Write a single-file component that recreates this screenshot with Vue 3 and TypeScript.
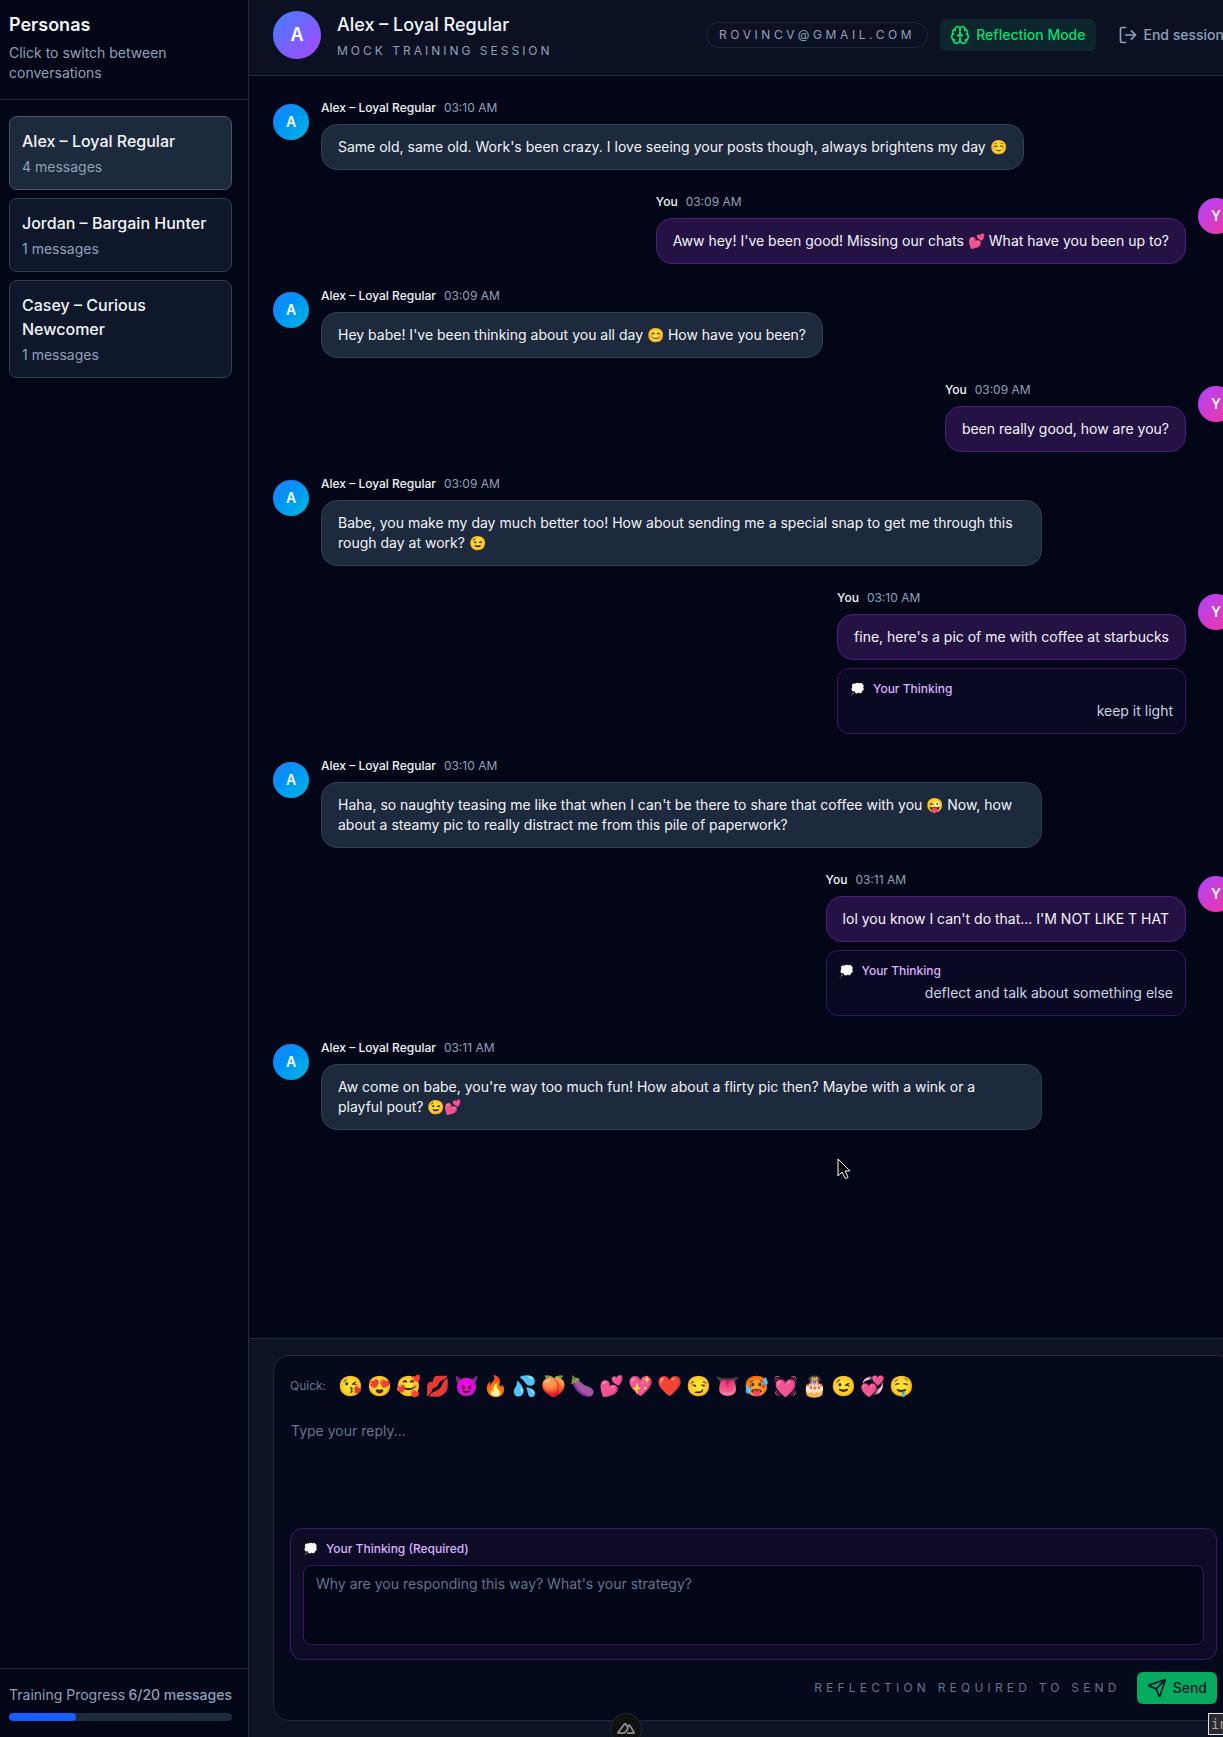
<script setup lang="ts">
import { ref } from 'vue'

interface Persona {
  name: string
  messages: number
}

interface Message {
  from: 'them' | 'you'
  time: string
  text: string
  thinking?: string
}

const personas: Persona[] = [
  { name: 'Alex – Loyal Regular', messages: 4 },
  { name: 'Jordan – Bargain Hunter', messages: 1 },
  { name: 'Casey – Curious Newcomer', messages: 1 },
]
const active = ref(0)

const messages: Message[] = [
  { from: 'them', time: '03:10 AM', text: "Same old, same old. Work's been crazy. I love seeing your posts though, always brightens my day ☺️" },
  { from: 'you', time: '03:09 AM', text: "Aww hey! I've been good! Missing our chats 💕 What have you been up to?" },
  { from: 'them', time: '03:09 AM', text: "Hey babe! I've been thinking about you all day 😊 How have you been?" },
  { from: 'you', time: '03:09 AM', text: 'been really good, how are you?' },
  { from: 'them', time: '03:09 AM', text: 'Babe, you make my day much better too! How about sending me a special snap to get me through this rough day at work? 😉' },
  { from: 'you', time: '03:10 AM', text: "fine, here's a pic of me with coffee at starbucks", thinking: 'keep it light' },
  { from: 'them', time: '03:10 AM', text: "Haha, so naughty teasing me like that when I can't be there to share that coffee with you 😜 Now, how about a steamy pic to really distract me from this pile of paperwork?" },
  { from: 'you', time: '03:11 AM', text: "lol you know I can't do that... I'M NOT LIKE T HAT", thinking: 'deflect and talk about something else' },
  { from: 'them', time: '03:11 AM', text: "Aw come on babe, you're way too much fun! How about a flirty pic then? Maybe with a wink or a\nplayful pout? 😉💕" },
]

const quickEmojis = ['😘', '😍', '🥰', '💋', '😈', '🔥', '💦', '🍑', '🍆', '💕', '💖', '❤️', '😏', '👅', '🥵', '💓', '🎂', '😉', '💞', '🤤']

const sent = 6
const goal = 20
const reply = ref('')
const strategy = ref('')
</script>

<template>
  <div class="viewport">
    <div class="shell">
      <aside class="sidebar">
        <header class="side-head">
          <h2>Personas</h2>
          <p>Click to switch between conversations</p>
        </header>
        <nav class="personas">
          <button
            v-for="(p, i) in personas"
            :key="p.name"
            type="button"
            class="persona"
            :class="{ active: i === active }"
            @click="active = i"
          >
            <span class="persona-name">{{ p.name }}</span>
            <span class="persona-count">{{ p.messages }} messages</span>
          </button>
        </nav>
        <footer class="progress">
          <div class="progress-row">
            <span>Training Progress</span>
            <strong>{{ sent }}/{{ goal }} messages</strong>
          </div>
          <div class="track"><div class="fill" :style="{ width: (sent / goal) * 100 + '%' }"></div></div>
        </footer>
      </aside>

      <main class="main">
        <header class="top">
          <div class="avatar big">A</div>
          <div class="titles">
            <h1>Alex – Loyal Regular</h1>
            <p>MOCK TRAINING SESSION</p>
          </div>
          <div class="actions">
            <span class="email">ROVINCV@GMAIL.COM</span>
            <button type="button" class="btn reflect">
              <svg class="icon" viewBox="0 0 24 24">
                <path d="M12 18V5" />
                <path d="M15 13a4.17 4.17 0 0 1-3-4 4.17 4.17 0 0 1-3 4" />
                <path d="M17.598 6.5A3 3 0 1 0 12 5a3 3 0 1 0-5.598 1.5" />
                <path d="M17.997 5.125a4 4 0 0 1 2.526 5.77" />
                <path d="M18 18a4 4 0 0 0 2-7.464" />
                <path d="M19.967 17.483A4 4 0 1 1 12 18a4 4 0 1 1-7.967-.517" />
                <path d="M6 18a4 4 0 0 1-2-7.464" />
                <path d="M6.003 5.125a4 4 0 0 0-2.526 5.77" />
              </svg>
              Reflection Mode
            </button>
            <button type="button" class="btn end">
              <svg class="icon" viewBox="0 0 24 24">
                <path d="m16 17 5-5-5-5" />
                <path d="M21 12H9" />
                <path d="M9 21H5a2 2 0 0 1-2-2V5a2 2 0 0 1 2-2h4" />
              </svg>
              End session
            </button>
          </div>
        </header>

        <section class="messages">
          <article v-for="(m, i) in messages" :key="i" class="message" :class="m.from">
            <div class="avatar">{{ m.from === 'you' ? 'Y' : 'A' }}</div>
            <div class="body">
              <div class="meta">
                <span class="author">{{ m.from === 'you' ? 'You' : 'Alex – Loyal Regular' }}</span>
                <time>{{ m.time }}</time>
              </div>
              <div class="bubble">{{ m.text }}</div>
              <div v-if="m.thinking" class="thought">
                <div class="thought-label"><span>💭</span><span>Your Thinking</span></div>
                <p>{{ m.thinking }}</p>
              </div>
            </div>
          </article>
        </section>

        <section class="composer">
          <form class="card" @submit.prevent>
            <div class="quick">
              <span class="quick-label">Quick:</span>
              <button v-for="e in quickEmojis" :key="e" type="button" class="emoji" @click="reply += e">{{ e }}</button>
            </div>
            <textarea v-model="reply" class="reply" aria-label="Reply" placeholder="Type your reply..."></textarea>
            <div class="strategy">
              <label for="strategy" class="thought-label"><span>💭</span><span>Your Thinking (Required)</span></label>
              <textarea id="strategy" v-model="strategy" placeholder="Why are you responding this way? What's your strategy?"></textarea>
            </div>
            <div class="send-row">
              <span class="hint">REFLECTION REQUIRED TO SEND</span>
              <button type="submit" class="btn send">
                <svg class="icon" viewBox="0 0 24 24">
                  <path d="M14.536 21.686a.5.5 0 0 0 .937-.024l6.5-19a.496.496 0 0 0-.635-.635l-19 6.5a.5.5 0 0 0-.024.937l7.93 3.18a2 2 0 0 1 1.112 1.11z" />
                  <path d="m21.854 2.147-10.94 10.939" />
                </svg>
                Send
              </button>
            </div>
          </form>
        </section>
      </main>
    </div>

    <button type="button" class="devtools" aria-label="Nuxt DevTools">
      <svg viewBox="0 0 324 200">
        <path d="M182 184h114c8 0 14-7 9-15L230 42c-4-7-13-7-17 0l-20 34-38-62c-4-7-13-7-17 0L21 169c-5 8 1 15 9 15h72c28 0 49-12 63-36l36-61" />
      </svg>
    </button>
    <div class="inspector">in</div>
    <svg class="cursor" viewBox="0 0 14 22">
      <path d="M1 1v17l4-4 3 6c1 1 3 0 3-1l-3-6h5z" />
    </svg>
  </div>
</template>

<style>
body {
  background: #020618;
}
</style>

<style scoped>
* {
  box-sizing: border-box;
}

.viewport {
  position: relative;
  min-height: 100vh;
  overflow: hidden;
  background: #020617;
  color: #f1f5f9;
  font-family: Inter, 'Noto Sans', sans-serif;
  font-size: 14px;
  line-height: 20px;
}

h1,
h2,
p {
  margin: 0;
}

button,
textarea {
  font: inherit;
  color: inherit;
}

/* The app frame is slightly larger than the window and scrolled a little */
.shell {
  display: flex;
  width: calc(100% + 42px);
  min-height: calc(100vh + 5px);
  margin: -5px 0 0 -7px;
}

.sidebar {
  display: flex;
  flex: none;
  flex-direction: column;
  width: 256px;
  border-right: 1px solid #1d293d;
}

.side-head {
  padding: 16px;
  border-bottom: 1px solid #1d293d;
}

h1,
h2 {
  font-size: 18px;
  line-height: 28px;
  font-weight: 600;
}

h1 {
  font-weight: 500;
}

.side-head p {
  margin-top: 4px;
  color: #90a1b9;
}

.personas {
  display: flex;
  flex: 1;
  flex-direction: column;
  gap: 8px;
  padding: 16px;
}

.persona {
  display: flex;
  flex-direction: column;
  gap: 4px;
  padding: 12px;
  border: 1px solid #314158;
  border-radius: 8px;
  background: #0f172b;
  text-align: left;
}

.persona.active {
  border-color: #45556c;
  background: #1d293d;
}

.persona-name {
  font-size: 16px;
  line-height: 24px;
  font-weight: 500;
}

.persona-count {
  color: #90a1b9;
}

.progress {
  padding: 16px;
  border-top: 1px solid #1d293d;
  color: #90a1b9;
}

.progress-row {
  display: flex;
  justify-content: space-between;
  white-space: nowrap;
}

.progress-row strong {
  font-weight: 500;
}

.track {
  height: 8px;
  margin-top: 8px;
  border-radius: 4px;
  background: #1d293d;
  overflow: hidden;
}

.fill {
  height: 100%;
  border-radius: 4px;
  background: #155dfc;
}

.main {
  display: flex;
  flex: 1;
  flex-direction: column;
  min-width: 0;
}

.top {
  display: flex;
  align-items: center;
  gap: 16px;
  padding: 16px 24px;
  border-bottom: 1px solid #1d293d;
  background: #0b1123;
}

.avatar {
  display: flex;
  flex: none;
  align-items: center;
  justify-content: center;
  width: 36px;
  height: 36px;
  border-radius: 50%;
  background: linear-gradient(135deg, #2b7fff, #0092f8 40%, #00b8db);
  color: #fff;
  font-weight: 600;
}

.avatar.big {
  width: 48px;
  height: 48px;
  background: linear-gradient(135deg, #3f80ff, #ad46ff);
  font-size: 18px;
}

.titles p {
  margin-top: 4px;
  color: #90a1b9;
  font-size: 12px;
  line-height: 16px;
  letter-spacing: 3px;
}

.actions {
  display: flex;
  align-items: center;
  gap: 12px;
  margin-left: auto;
  white-space: nowrap;
}

.email {
  padding: 4px 12px;
  border: 1px solid #1d293d;
  border-radius: 13px;
  color: #90a1b9;
  font-size: 12px;
  line-height: 16px;
  letter-spacing: 0.3em;
}

.btn {
  display: flex;
  align-items: center;
  gap: 6px;
  height: 32px;
  padding: 0 10px;
  border: 0;
  border-radius: 6px;
  background: none;
  font-weight: 500;
}

.icon {
  width: 20px;
  height: 20px;
  fill: none;
  stroke: currentColor;
  stroke-width: 2;
  stroke-linecap: round;
  stroke-linejoin: round;
}

.reflect {
  background: #0b262c;
  color: #05df72;
}

.end {
  color: #90a1b9;
}

.messages {
  display: flex;
  flex: 1;
  flex-direction: column;
  gap: 24px;
  padding: 24px;
}

.message {
  display: flex;
  align-items: flex-start;
  gap: 12px;
}

.message.you {
  flex-direction: row-reverse;
}

.message .avatar {
  margin-top: 4px;
}

.you .avatar {
  background: linear-gradient(135deg, #ad46ff, #f6339a);
}

.body {
  display: flex;
  flex-direction: column;
  gap: 8px;
  max-width: 75%;
}

.meta {
  display: flex;
  gap: 8px;
  color: #90a1b9;
  font-size: 12px;
  line-height: 16px;
}

.author {
  color: #f1f5f9;
  font-weight: 500;
}

.bubble {
  padding: 12px 16px;
  border: 1px solid #314158;
  border-radius: 16px;
  background: #1d293d;
  white-space: pre-wrap;
}

/* Keeps a bubble whose text has a line break as wide as the wrapped ones */
.message:last-child .body {
  width: 75%;
}

.you .bubble {
  border-color: #4f1d80;
  background: #251244;
}

.thought {
  padding: 12px;
  border: 1px solid #39175f;
  border-radius: 12px;
  background: #090822;
}

.thought-label {
  display: flex;
  gap: 8px;
  color: #dab2ff;
  font-size: 12px;
  line-height: 16px;
  font-weight: 500;
}

.thought p {
  margin-top: 4px;
  color: #cad5e2;
  text-align: right;
}

.composer {
  padding: 16px 24px;
  border-top: 1px solid #1d293d;
  background: #0c1325;
}

.card {
  display: flex;
  flex-direction: column;
  gap: 12px;
  padding: 16px;
  border: 1px solid #1d293d;
  border-radius: 16px;
  background: #040a1b;
}

.quick {
  display: flex;
  align-items: center;
  gap: 4px;
}

.quick-label {
  margin-right: 8px;
  color: #62748e;
  font-size: 12px;
  line-height: 16px;
}

.emoji {
  padding: 0;
  border: 0;
  background: none;
  font-size: 20px;
  line-height: 28px;
}

textarea {
  display: block;
  width: 100%;
  resize: none;
  outline: none;
}

textarea::placeholder {
  color: #62748e;
  opacity: 1;
}

.reply {
  height: 104px;
  padding: 8px 0;
  border: 1px solid transparent;
  background: none;
}

.strategy {
  display: flex;
  flex-direction: column;
  gap: 8px;
  padding: 12px 12px 14px;
  border: 1px solid #3f1a68;
  border-radius: 12px;
  background: #0e0b26;
}

.strategy textarea {
  height: 80px;
  padding: 8px 12px;
  border: 1px solid #3b1763;
  border-radius: 8px;
  background: #020617;
}

.send-row {
  display: flex;
  align-items: center;
  justify-content: flex-end;
  gap: 16px;
}

.hint {
  color: #62748e;
  font-size: 12px;
  line-height: 16px;
  letter-spacing: 0.35em;
}

.send {
  background: #05ab5f;
  color: #0f172b;
}

.devtools {
  position: absolute;
  bottom: -8px;
  left: calc(50% + 14px);
  width: 32px;
  height: 32px;
  padding: 0 6px;
  border: 1px solid #262626;
  border-radius: 16px;
  background: #111;
  transform: translateX(-50%);
}

.devtools svg {
  display: block;
  width: 18px;
  fill: none;
  stroke: #8f8f8f;
  stroke-width: 32;
  stroke-linejoin: round;
}

.inspector {
  position: absolute;
  right: -20px;
  bottom: 2px;
  width: 35px;
  height: 22px;
  padding-left: 2px;
  border: 1px solid #e5e5e5;
  background: #2b2a33;
  color: #a3a3a3;
  font-family: 'DejaVu Sans Mono', monospace;
  font-size: 14px;
}

.cursor {
  position: absolute;
  top: 1158px;
  left: 837px;
  width: 14px;
  height: 22px;
  fill: #000;
  stroke: #fff;
}
</style>
